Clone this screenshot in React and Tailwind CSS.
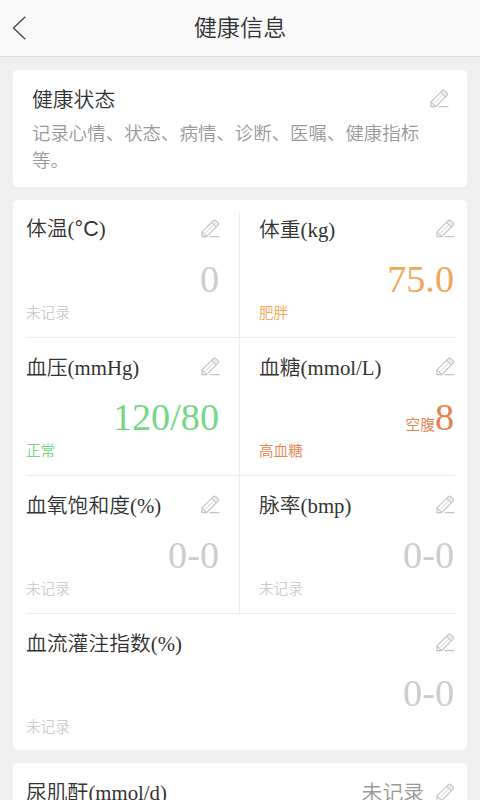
import React from "react";

const records = [
  { label: "体温", unit: "°C", value: "0", status: "未记录", color: "text-[#cccccc]" },
  { label: "体重", unit: "kg", value: "75.0", status: "肥胖", color: "text-[#f0a757]" },
  { label: "血压", unit: "mmHg", value: "120/80", status: "正常", color: "text-[#72d885]" },
  { label: "血糖", unit: "mmol/L", prefix: "空腹", value: "8", status: "高血糖", color: "text-[#e58152]" },
  { label: "血氧饱和度", unit: "%", value: "0-0", status: "未记录", color: "text-[#cccccc]" },
  { label: "脉率", unit: "bmp", value: "0-0", status: "未记录", color: "text-[#cccccc]" },
  { label: "血流灌注指数", unit: "%", value: "0-0", status: "未记录", color: "text-[#cccccc]", wide: true },
];

function EditIcon() {
  return (
    <svg
      className="mb-px h-[19px] w-[19px] shrink-0 text-[#bfc1c4]"
      viewBox="0 0 19 19"
      fill="none"
      stroke="currentColor"
      strokeWidth="1.2"
      strokeLinejoin="round"
    >
      <path d="M1 17.6 V12.9 L12.6 1.4 Q13.4 0.7 14.2 1.4 L17.3 4.3 Q18 5.1 17.3 5.9 L5.6 17.6 Z" />
      <path d="M1 12.9 L5.6 17.6 M10.6 3.4 L15.3 7.9" />
      <path d="M12.2 2 L16.7 6.4 M4.4 14 L12.8 5.7" strokeWidth="0.8" />
      <path d="M8.6 17.6 H18.4" />
    </svg>
  );
}

function RecordCell({ item, index }) {
  const isLeft = index % 2 === 0;
  const isFirstRow = index < 2;

  let cellClass = "flex flex-col justify-end border-[#ececec]";
  if (item.wide) {
    cellClass += " col-span-2 h-[137px]";
  } else {
    cellClass += isFirstRow ? " h-[126px]" : " h-[138px]";
    cellClass += isLeft ? " border-r border-b pr-[19px]" : " border-b pl-[19px]";
  }

  return (
    <div className={cellClass}>
      <div className="flex h-7 items-center justify-between">
        <h2 className="pt-px text-[20.8px] text-[#333333]">
          {item.label}(
          <span className={item.unit === "°C" ? "font-['Liberation_Sans'] text-[21.5px]" : ""}>{item.unit}</span>)
        </h2>
        <EditIcon />
      </div>
      <div className={"mt-3 flex h-12 items-baseline justify-end pr-px leading-[48px] " + item.color}>
        {item.prefix && <span className="text-[14.7px]">{item.prefix}</span>}
        <span className="text-[38.2px]">{item.value}</span>
      </div>
      <p className={"mb-[14px] h-5 text-[14.6px] leading-5 " + item.color}>{item.status}</p>
    </div>
  );
}

function App() {
  return (
    <div className="h-[800px] w-[480px] overflow-hidden bg-[#efefef] font-['Liberation_Serif','Noto_Sans_CJK_SC',sans-serif] font-[350]">
      <header className="grid h-[57px] grid-cols-[1fr_auto_1fr] items-center border-b border-[#dddddd] bg-[#f9f9f9] pl-3">
        <svg className="h-6 w-4" viewBox="0 0 16 24" fill="none" stroke="#444444" strokeWidth="1.3">
          <path d="M13.3 0.8 L1.5 12 L13.3 23.2" />
        </svg>
        <h1 className="pr-3 text-[23.2px] leading-[54px] text-[#333333]">健康信息</h1>
      </header>

      <main className="flex flex-col gap-[13px] px-[13px] pt-[13px]">
        <section className="h-[117px] rounded-[5px] bg-white pt-[15px] pr-[18px] pl-[19px]">
          <div className="flex h-7 items-center justify-between">
            <h2 className="pt-0.5 text-[20.8px] text-[#333333]">健康状态</h2>
            <EditIcon />
          </div>
          <p className="mt-[8px] w-[392px] text-[18.45px] leading-[27px] text-[#999999]">
            记录心情、状态、病情、诊断、医嘱、健康指标等。
          </p>
        </section>

        <section className="grid h-[550px] grid-cols-[214px_1fr] content-start rounded-[5px] bg-white pt-3 pr-3 pl-[13px]">
          {records.map((item, index) => (
            <RecordCell key={item.label} item={item} index={index} />
          ))}
        </section>

        <section className="flex h-[60px] items-center rounded-[5px] bg-white pr-3 pl-[13px]">
          <h2 className="flex-1 text-[20.8px] text-[#333333]">尿肌酐(mmol/d)</h2>
          <span className="mr-3 text-[20.8px] text-[#999999]">未记录</span>
          <EditIcon />
        </section>
      </main>
    </div>
  );
}

export default App;
